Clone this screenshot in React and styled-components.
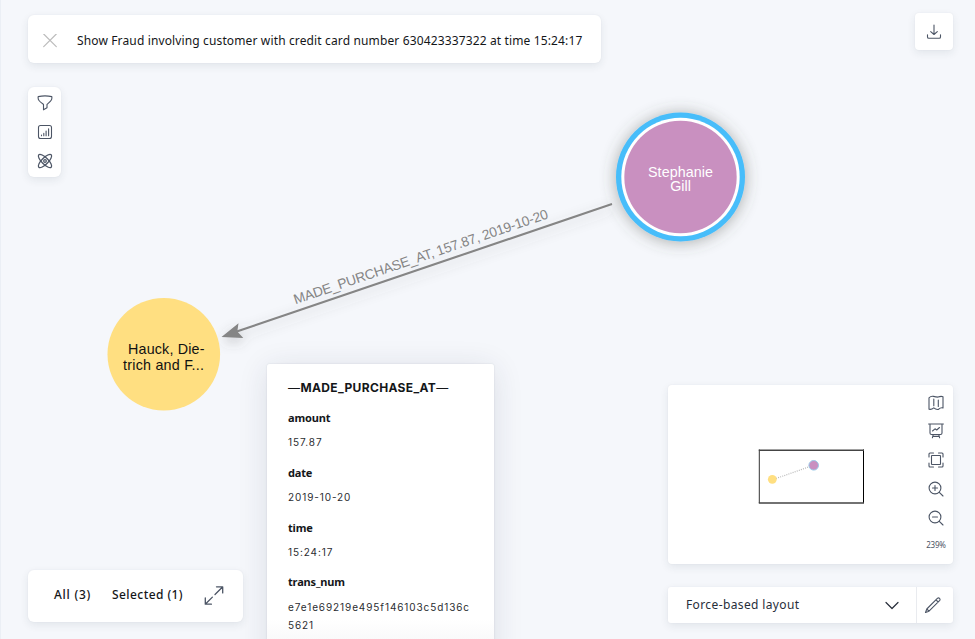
import React from 'react';
import styled, { createGlobalStyle } from 'styled-components';

const Global = createGlobalStyle`
  * { box-sizing: border-box; }
  body { margin: 0; background: #f5f7fb; overflow: hidden; }
  button { font: inherit; color: inherit; border: 0; background: none; padding: 0; }
`;

const Stage = styled.main`
  position: relative;
  width: 975px;
  height: 639px;
  overflow: hidden;
  background: #f5f7fb;
  border-left: 1px solid #ebeff5;
  font-family: 'Noto Sans', sans-serif;
  color: #141619;
`;

const Graph = styled.svg`
  position: absolute;
  top: 0;
  left: -1px;
  font-family: 'Liberation Sans', sans-serif;
`;

const Overlay = styled.div`
  position: relative;
  display: flex;
  justify-content: space-between;
  height: 100%;
  padding: 13px 22px 16px 27px;
`;

const Column = styled.div`
  display: flex;
  flex-direction: column;
  align-items: ${(p) => p.$align};
`;

const Panel = styled.section`
  display: flex;
  background: #fff;
  border-radius: ${(p) => p.$radius || 6}px;
  box-shadow: 0 3px 9px rgba(35, 50, 70, 0.09), 0 0 2px rgba(35, 50, 70, 0.05);
`;

const SearchBar = styled(Panel)`
  width: 573px;
  height: 48px;
  margin-top: 2px;
  padding: 3px 0 0 15px;
  align-items: center;
  gap: 20px;
`;

const Label = styled.span`
  font-size: ${(p) => p.$size}px;
  font-weight: ${(p) => p.$weight || 400};
  letter-spacing: ${(p) => p.$track || 0}px;
  line-height: 18px;
  white-space: nowrap;
`;

const Tools = styled(Panel)`
  width: 33px;
  height: 90px;
  margin-top: 24px;
  padding: 8px 0;
  flex-direction: column;
  align-items: center;
  gap: 13px;
`;

const Selection = styled(Panel)`
  width: 215px;
  height: 52px;
  margin: auto 0 1px;
  padding: 0 19px 2px 26px;
  align-items: center;
  justify-content: space-between;
`;

const DownloadButton = styled(Panel).attrs({ as: 'button' })`
  width: 38px;
  height: 37px;
  border-radius: 4px;
  align-items: center;
  justify-content: center;
`;

const MapPanel = styled(Panel)`
  width: 285px;
  height: 179px;
  margin-top: auto;
  justify-content: space-between;
`;

const MapTools = styled.div`
  display: flex;
  flex-direction: column;
  align-items: center;
  width: 34px;
  padding-top: 10px;
  gap: 13px;
  color: #4c5565;

  svg:first-child { margin-bottom: -1px; }
`;

const LayoutBar = styled(Panel)`
  width: 285px;
  height: 36px;
  margin-top: 23px;
  color: #272e3a;
`;

const LayoutSelect = styled.button`
  display: flex;
  flex: 1;
  align-items: center;
  justify-content: space-between;
  padding: 0 17px 0 18px;
`;

const EditButton = styled.button`
  display: flex;
  width: 37px;
  align-items: center;
  justify-content: center;
  padding-right: 4px;
  border-left: 1px solid #e9ebef;
`;

const Icon = styled.svg`
  display: block;
  flex: none;
  fill: none;
  stroke: ${(p) => p.$color || '#4c5565'};
  stroke-width: ${(p) => p.$stroke || 1.1};
  stroke-linecap: round;
  stroke-linejoin: round;
`;

const Details = styled.aside`
  position: absolute;
  left: 266px;
  top: 364px;
  width: 227px;
  height: 300px;
  padding: 15px 18px 0 21px;
  border-radius: 3px;
  background: linear-gradient(#fff 255px, #f9f9fa 276px);
  box-shadow: 0 4px 30px rgba(30, 45, 70, 0.12), 0 0 2px rgba(30, 45, 70, 0.14);
`;

const DetailsTitle = styled.h2`
  margin: 0;
  font: 700 12px/18px Inter, sans-serif;
  letter-spacing: 0.36px;
  white-space: nowrap;

  span { font-weight: 400; }
`;

const Properties = styled.dl`
  margin: 12px 0 0;
`;

const Name = styled.dt`
  font: 700 11px/18px 'Noto Sans', sans-serif;
  letter-spacing: -0.16px;
`;

const Value = styled.dd`
  margin: 6.3px 0 12.5px;
  font: 400 10px/18px Inter, sans-serif;
  letter-spacing: 0.9px;
  overflow-wrap: anywhere;
  color: #2b2d31;
`;

const ZoomLevel = styled.span`
  font-size: 8px;
  line-height: 12px;
  letter-spacing: -0.2px;
`;

const properties = [
  ['amount', '157.87'],
  ['date', '2019-10-20'],
  ['time', '15:24:17'],
  ['trans_num', 'e7e1e69219e495f146103c5d136c5621'],
];

function Network() {
  return (
    <Graph width="975" height="639">
      <defs>
        <filter id="halo" x="-30%" y="-30%" width="160%" height="160%">
          <feDropShadow dx="0" dy="1" stdDeviation="8" floodColor="#4e514c" floodOpacity=".46" />
        </filter>
        <filter id="edgeShadow" x="-10%" y="-20%" width="120%" height="150%">
          <feDropShadow dx="0" dy="4" stdDeviation="6" floodColor="#555" floodOpacity=".3" />
        </filter>
      </defs>
      <g filter="url(#edgeShadow)">
        <path d="M612 204 236 331.8" stroke="#858585" strokeWidth="2.1" />
        <path d="M221.5 337 238.5 323.2 237.3 331.6 243.3 338Z" fill="#858585" />
      </g>
      <text transform="translate(295.6 304.3) rotate(-18.8)" fontSize="13.8" fill="#858585" textLength="267.8">
        MADE_PURCHASE_AT, 157.87, 2019-10-20
      </text>
      <circle cx="680.5" cy="177" r="64.5" fill="#46bdfa" filter="url(#halo)" />
      <circle cx="680.5" cy="177" r="59.2" fill="#fff" />
      <circle cx="680.5" cy="177" r="56.2" fill="#c990c0" />
      <g fontSize="14.3" textAnchor="middle" fill="#fff">
        <text x="680.5" y="177" textLength="65">Stephanie</text>
        <text x="680.5" y="191.3">Gill</text>
      </g>
      <circle cx="163.8" cy="354.3" r="56.3" fill="#ffdf81" />
      <g fontSize="14.3" fill="#111">
        <text x="128" y="354.4" textLength="76.5">Hauck, Die-</text>
        <text x="123" y="369.6" textLength="81">trich and F...</text>
      </g>
    </Graph>
  );
}

function MiniMap() {
  return (
    <svg width="240" height="179">
      <path d="M91.3 64.5V118" stroke="#333" />
      <path d="M195.5 64.5V118" stroke="#000" />
      <path d="M90.8 65.3H196M90.8 118H196" stroke="#444" strokeWidth="1.4" />
      <path d="M108 93.5 142 81.5" stroke="#b8b8b8" strokeWidth="1.2" strokeDasharray="1 1.2" />
      <circle cx="104.3" cy="94.3" r="4.4" fill="#ffdf81" />
      <circle cx="145.7" cy="80.3" r="4.8" fill="#c990c0" stroke="#9acbe9" />
    </svg>
  );
}

export default function App() {
  return (
    <>
      <Global />
      <Stage>
        <Network />
        <Overlay>
          <Column $align="flex-start">
            <SearchBar>
              <Icon width="14" height="14" $color="#bcbcbc" $stroke="1.2"><path d="M.7 0 13.3 12.6M13.3 0 .7 12.6" /></Icon>
              <Label $size={12} $track={0.135}>Show Fraud involving customer with credit card number 630423337322 at time 15:24:17</Label>
            </SearchBar>
            <Tools>
              <Icon width="16" height="16"><path d="M1.2 1.6Q8 .2 14.8 1.6C15.4 5 13.6 6.2 10 9.4V12.8L6.5 14.8V9.4C2.5 6.3.6 5 1.2 1.6Z" /></Icon>
              <Icon width="16" height="16"><rect x="1.5" y="1.5" width="13" height="13" rx="2" /><path d="M4.5 11.8V11M6.8 11.8V9.4M9.1 11.8V7.1M11.6 11.8V4.8" /></Icon>
              <Icon width="16" height="16" $stroke="1.25"><g transform="rotate(45 8 8)"><ellipse cx="8" cy="8" rx="8.8" ry="3.2" /><ellipse cx="8" cy="8" rx="3.2" ry="8.8" /></g><circle cx="8" cy="8" r="1.3" /></Icon>
            </Tools>
            <Selection>
              <Label $size={12} $weight={500} $track={0.75}>All (3)</Label>
              <Label $size={12} $weight={500} $track={0.42}>Selected (1)</Label>
              <Icon width="20" height="20" $stroke="1.3"><path d="M11 9.5 18.5 2M12.5 1.8H18.7V7.9M8.4 12.1 1.5 19M1.3 13V19.2H7.4" /></Icon>
            </Selection>
          </Column>
          <Column $align="flex-end">
            <DownloadButton aria-label="Download">
              <Icon width="16" height="16"><path d="M8 1V10M4.7 7.6 8 10.5 11.3 7.6M1.5 10.8V13Q1.5 14.3 2.8 14.3H13.2Q14.5 14.3 14.5 13V10.8" /></Icon>
            </DownloadButton>
            <MapPanel $radius={4}>
              <MiniMap />
              <MapTools>
                <Icon width="16" height="16"><path d="M1 2.8Q3 .8 5.5 1.4T10 2.1Q13 .9 15 1.7V12.9Q12.5 12.3 10.5 14.4 8 14.9 5.8 12.9 3.5 14.8 1 14.2ZM5.8 4V10.8M10.3 5V11.5" /></Icon>
                <Icon width="16" height="16"><path d="M.6 1H15.4M2 1V10Q2 11.5 3.5 11.5H12.5Q14 11.5 14 10V1M4.5 8 7 5.8 8.7 7 11.5 4.5M5.2 11.7 4.4 14.8M10.8 11.7 11.6 14.8M4.8 13.4H11.2" /></Icon>
                <Icon width="16" height="16"><rect x="3.5" y="3.5" width="9" height="9" rx=".5" /><path d="M1 5V2Q1 1 2 1H5.5M10.5 1H14Q15 1 15 2V5M15 11V14Q15 15 14 15H10.5M5.5 15H2Q1 15 1 14V11" /></Icon>
                <Icon width="16" height="16"><circle cx="7" cy="7" r="5.9" /><path d="M11.3 11.3 15 15M4.5 7H9.5M7 4.5V9.5" /></Icon>
                <Icon width="16" height="16"><circle cx="7" cy="7" r="5.9" /><path d="M11.3 11.3 15 15M4.5 7H9.5" /></Icon>
                <ZoomLevel>239%</ZoomLevel>
              </MapTools>
            </MapPanel>
            <LayoutBar $radius={3}>
              <LayoutSelect>
                <Label $size={12} $track={0.38}>Force-based layout</Label>
                <Icon width="14" height="9" $color="#272e3a" $stroke="1.2"><path d="M1 1.5 7 7.5 13 1.5" /></Icon>
              </LayoutSelect>
              <EditButton aria-label="Edit">
                <Icon width="18" height="18" $stroke="1.1"><path d="M1.5 16.5 2.8 13 13.6 2.2A1.6 1.6 0 0 1 15.8 4.4L5 15.2ZM12 3.8 14.2 6M2.8 13 5 15.2" /></Icon>
              </EditButton>
            </LayoutBar>
          </Column>
        </Overlay>
        <Details>
          <DetailsTitle><span>—</span>MADE_PURCHASE_AT<span>—</span></DetailsTitle>
          <Properties>
            {properties.map(([name, value]) => (
              <React.Fragment key={name}>
                <Name>{name}</Name>
                <Value>{value}</Value>
              </React.Fragment>
            ))}
          </Properties>
        </Details>
      </Stage>
    </>
  );
}
